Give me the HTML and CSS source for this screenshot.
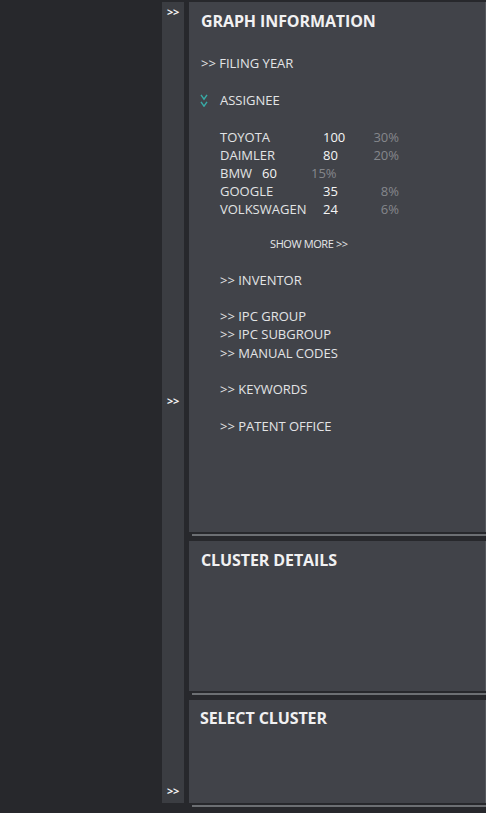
FILE: index.html
```html
<!DOCTYPE html>
<html lang="en">
<head>
<meta charset="utf-8">
<title>Graph Information</title>
<link rel="stylesheet" href="styles.css">
</head>
<body>
<div class="app">
  <div class="void"></div>
  <nav class="rail">
    <span class="rail-toggle">&gt;&gt;</span>
    <span class="rail-toggle">&gt;&gt;</span>
    <span class="rail-toggle">&gt;&gt;</span>
  </nav>
  <div class="main">
    <section class="panel panel-graph">
      <h2 class="panel-title">GRAPH INFORMATION</h2>
      <div class="filter filter-top">&gt;&gt; FILING YEAR</div>
      <div class="assignee-head">
        <svg class="chevrons" width="8" height="13" viewBox="0 0 8 13" aria-hidden="true">
          <polyline points="1,0.8 4,5.2 7,0.8" />
          <polyline points="1,7.8 4,12.2 7,7.8" />
        </svg>
        <span>ASSIGNEE</span>
      </div>
      <div class="assignee-table">
        <div class="row"><span class="name">TOYOTA</span><span class="num">100</span><span class="pct">30%</span></div>
        <div class="row"><span class="name">DAIMLER</span><span class="num">80</span><span class="pct">20%</span></div>
        <div class="row row-odd"><span class="name">BMW</span><span class="num odd-num">60</span><span class="pct odd-pct">15%</span></div>
        <div class="row"><span class="name">GOOGLE</span><span class="num">35</span><span class="pct">8%</span></div>
        <div class="row"><span class="name">VOLKSWAGEN</span><span class="num">24</span><span class="pct">6%</span></div>
      </div>
      <div class="show-more">SHOW MORE &gt;&gt;</div>
      <ul class="filters">
        <li>&gt;&gt; INVENTOR</li>
        <li class="group-start">&gt;&gt; IPC GROUP</li>
        <li>&gt;&gt; IPC SUBGROUP</li>
        <li>&gt;&gt; MANUAL CODES</li>
        <li class="group-start">&gt;&gt; KEYWORDS</li>
        <li class="group-start">&gt;&gt; PATENT OFFICE</li>
      </ul>
    </section>
    <div class="sep"></div>
    <section class="panel panel-cluster">
      <h2 class="panel-title">CLUSTER DETAILS</h2>
    </section>
    <div class="sep"></div>
    <section class="panel panel-select">
      <h2 class="panel-title">SELECT CLUSTER</h2>
    </section>
    <div class="sep sep-last"></div>
  </div>
</div>
</body>
</html>
```
FILE: styles.css
```css
html, body {
  margin: 0;
  padding: 0;
  height: 100%;
}

body {
  background: #27282c;
  color: #e3e4e6;
  font-family: "Open Sans", "DejaVu Sans", sans-serif;
  overflow: hidden;
}

.app {
  display: flex;
  height: 813px;
  padding-top: 2px;
  box-sizing: border-box;
}

.void {
  flex: 0 0 162px;
}

.rail {
  flex: 0 0 22px;
  height: 801px;
  background: #3b3d42;
  display: flex;
  flex-direction: column;
  justify-content: space-between;
  align-items: center;
  padding: 3.5px 0 6px;
  box-sizing: border-box;
}

.rail-toggle {
  font-size: 11px;
  font-weight: 700;
  line-height: 12px;
  letter-spacing: -0.3px;
  color: #f4f4f4;
}

.main {
  flex: 1;
  margin-left: 5px;
  display: flex;
  flex-direction: column;
  min-width: 0;
}

.panel {
  background: #414349;
  padding: 9px 0 0 12px;
  box-sizing: border-box;
  border-right: 1px solid #55585d;
}

.panel-graph {
  height: 530px;
}

.panel-cluster {
  height: 150px;
}

.panel-select {
  height: 103px;
  padding-top: 8px;
  padding-left: 11px;
}

.sep {
  height: 2px;
  background: #6c6f73;
  margin: 2px 0 5px 3px;
}

.sep-last {
  margin-bottom: 0;
}

.panel-title {
  margin: 0;
  font-size: 16px;
  font-weight: 700;
  line-height: 20px;
  letter-spacing: -0.1px;
  color: #f1f1f2;
}

.filter,
.assignee-head,
.assignee-table,
.filters {
  font-size: 13px;
  line-height: 18px;
}

.filter-top {
  margin-top: 23px;
}

.assignee-head {
  margin-top: 19px;
  margin-left: -1px;
  display: flex;
  align-items: center;
  gap: 12px;
  height: 18px;
}

.chevrons polyline {
  fill: none;
  stroke: #38aaa5;
  stroke-width: 1.4;
}

.assignee-table {
  margin-top: 19px;
  padding-left: 19px;
}

.row {
  display: grid;
  grid-template-columns: 103px 40px 36px;
}

.name {
  color: #e2e3e5;
}

.num {
  color: #f5f5f5;
}

.pct {
  color: #85878c;
  text-align: right;
}

.row-odd {
  display: flex;
}

.odd-num {
  margin-left: 10px;
}

.odd-pct {
  margin-left: 34px;
  text-align: left;
}

.show-more {
  margin-top: 16.5px;
  padding-left: 69px;
  font-size: 11px;
  line-height: 18px;
  letter-spacing: -0.4px;
  color: #e6e7e9;
}

.filters {
  list-style: none;
  margin: 18px 0 0;
  padding-left: 19px;
  line-height: 18.3px;
}

.filters .group-start {
  margin-top: 18.3px;
}
```
